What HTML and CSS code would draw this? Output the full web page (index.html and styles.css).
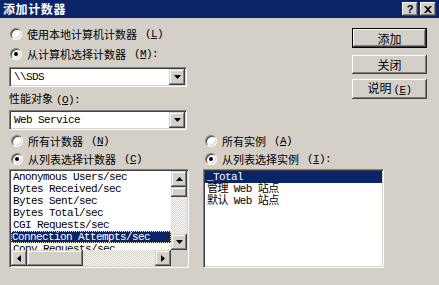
FILE: index.html
```html
<!DOCTYPE html>
<html lang="zh-CN">
<head>
    <meta charset="UTF-8">
    <title>添加计数器</title>
    <link rel="stylesheet" href="styles.css">
</head>
<body>

    <div class="window">
        <div class="titlebar">
            <span class="title">添加计数器</span>
            <div class="caption-buttons">
                <span class="cap-btn">?</span>
                <span class="cap-btn">
                    <svg width="8" height="7" viewBox="0 0 8 7"><path d="M0 0h2l2 2 2-2h2L5 3.5 8 7H6L4 5 2 7H0l3-3.5z" fill="#000"/></svg>
                </span>
            </div>
        </div>

        <div class="client">
            <div class="top">
                <div class="source">
                    <div class="radio-row"><span class="radio"></span>使用本地计算机计数器<span class="key">(<u>L</u>)</span></div>
                    <div class="radio-row"><span class="radio checked"></span>从计算机选择计数器<span class="key">(<u>M</u>):</span></div>
                    <div class="combo">
                        <span class="combo-text">\\SDS</span>
                        <span class="btn3d arrow-btn"><svg width="7" height="4" viewBox="0 0 7 4"><path d="M0 0h7L3.5 4z" fill="#000"/></svg></span>
                    </div>
                    <div class="field-label">性能对象<span class="key">(<u>O</u>):</span></div>
                    <div class="combo">
                        <span class="combo-text">Web Service</span>
                        <span class="btn3d arrow-btn"><svg width="7" height="4" viewBox="0 0 7 4"><path d="M0 0h7L3.5 4z" fill="#000"/></svg></span>
                    </div>
                </div>

                <div class="buttons">
                    <button class="push default">添加</button>
                    <button class="push close-btn">关闭</button>
                    <button class="push help-btn">说明<span class="key">(<u>E</u>)</span></button>
                </div>
            </div>

            <div class="bottom">
                <div class="panel counters">
                    <div class="radio-row short"><span class="radio"></span>所有计数器<span class="key">(<u>N</u>)</span></div>
                    <div class="radio-row short"><span class="radio checked"></span>从列表选择计数器<span class="key">(<u>C</u>)</span></div>
                    <div class="listbox with-scroll">
                        <ul class="items">
                            <li>Anonymous Users/sec</li>
                            <li>Bytes Received/sec</li>
                            <li>Bytes Sent/sec</li>
                            <li>Bytes Total/sec</li>
                            <li>CGI Requests/sec</li>
                            <li class="selected focused">Connection Attempts/sec</li>
                            <li>Copy Requests/sec</li>
                        </ul>
                        <div class="vscroll">
                            <span class="btn3d sb-btn"><svg width="7" height="4" viewBox="0 0 7 4"><path d="M0 4h7L3.5 0z" fill="#000"/></svg></span>
                            <span class="btn3d vthumb"></span>
                            <span class="track"></span>
                            <span class="btn3d sb-btn"><svg width="7" height="4" viewBox="0 0 7 4"><path d="M0 0h7L3.5 4z" fill="#000"/></svg></span>
                        </div>
                        <div class="hscroll">
                            <span class="btn3d sb-btn"><svg width="4" height="7" viewBox="0 0 4 7"><path d="M4 0v7L0 3.5z" fill="#000"/></svg></span>
                            <span class="btn3d hthumb"></span>
                            <span class="track"></span>
                            <span class="btn3d sb-btn"><svg width="4" height="7" viewBox="0 0 4 7"><path d="M0 0v7L4 3.5z" fill="#000"/></svg></span>
                        </div>
                        <div class="corner"></div>
                    </div>
                </div>

                <div class="panel instances">
                    <div class="radio-row short"><span class="radio"></span>所有实例<span class="key">(<u>A</u>)</span></div>
                    <div class="radio-row short"><span class="radio checked"></span>从列表选择实例<span class="key">(<u>I</u>):</span></div>
                    <div class="listbox">
                        <ul class="items">
                            <li class="selected">_Total</li>
                            <li>管理 Web 站点</li>
                            <li>默认 Web 站点</li>
                        </ul>
                    </div>
                </div>
            </div>
        </div>
    </div>

</body>
</html>
```

FILE: styles.css
```css
* {
    margin: 0;
    padding: 0;
    box-sizing: border-box;
}

body {
    background: #d4d0c8;
    font-family: "Noto Sans CJK SC", sans-serif;
    font-size: 11px;
    color: #000;
    overflow: hidden;
}

.window {
    width: 439px;
    height: 285px;
}

/* title bar */
.titlebar {
    height: 18px;
    background: #0a246a;
    display: flex;
    align-items: center;
    padding: 0 3px 0 3px;
}

.title {
    color: #fff;
    font-weight: bold;
    font-size: 12px;
    letter-spacing: 0.6px;
    line-height: 18px;
}

.caption-buttons {
    margin-left: auto;
    display: flex;
    gap: 2px;
}

.cap-btn {
    width: 16px;
    height: 14px;
    background: #d4d0c8;
    display: flex;
    align-items: center;
    justify-content: center;
    font-family: "Liberation Sans", sans-serif;
    font-weight: bold;
    font-size: 11px;
    line-height: 14px;
    box-shadow: inset -1px -1px #404040, inset 1px 1px #fff, inset -2px -2px #808080;
}

/* 3d helpers */
.btn3d {
    background: #d4d0c8;
    display: flex;
    align-items: center;
    justify-content: center;
    box-shadow: inset -1px -1px #404040, inset 1px 1px #d4d0c8, inset -2px -2px #808080, inset 2px 2px #fff;
}

.key {
    margin-left: 3px;
    font-family: "Liberation Mono", monospace;
    font-size: 11px;
    letter-spacing: -0.6px;
}

.client {
    padding: 6px 0 0 9px;
}

.top {
    display: flex;
}

.source {
    width: 178px;
}

/* radios */
.radio-row {
    height: 20px;
    display: flex;
    align-items: center;
    gap: 5px;
    padding-left: 1px;
    white-space: nowrap;
}

.radio-row.short {
    height: 18px;
}

.radio {
    position: relative;
    width: 12px;
    height: 12px;
    flex: none;
    border-radius: 50%;
    background: #fff;
    border: 1px solid;
    border-color: #808080 #fff #fff #808080;
    box-shadow: inset 1px 1px #404040, inset -1px -1px #d4d0c8;
}

.radio.checked::after {
    content: "";
    position: absolute;
    left: 3px;
    top: 3px;
    width: 4px;
    height: 4px;
    border-radius: 50%;
    background: #000;
}

/* combo boxes */
.combo {
    margin-top: 3px;
    height: 20px;
    background: #fff;
    display: flex;
    align-items: center;
    padding: 2px;
    border: 1px solid;
    border-color: #808080 #fff #fff #808080;
    box-shadow: inset 1px 1px #404040, inset -1px -1px #d4d0c8;
}

.combo-text {
    flex: 1;
    padding-left: 2px;
    font-family: "Liberation Mono", monospace;
    font-size: 11px;
    letter-spacing: -0.6px;
    line-height: 16px;
}

.arrow-btn {
    width: 16px;
    height: 16px;
    margin-right: -1px;
}

.field-label {
    height: 23px;
    line-height: 23px;
    white-space: nowrap;
}

.field-label + .combo {
    margin-top: 0;
}

/* push buttons */
.buttons {
    margin-left: auto;
    margin-right: 12px;
    width: 75px;
    padding-top: 4px;
    display: flex;
    flex-direction: column;
}

.push {
    font-family: "Noto Sans CJK SC", sans-serif;
    font-size: 12px;
    background: #d4d0c8;
    border: none;
    height: 19px;
    line-height: 17px;
    box-shadow: inset -1px -1px #404040, inset 1px 1px #fff, inset -2px -2px #808080;
}

.push.default {
    height: 20px;
    border: 1px solid #000;
}

.close-btn {
    margin-top: 7px;
}

.help-btn {
    margin-top: 5px;
    height: 20px;
}

.help-btn .key {
    margin-left: 2px;
}

/* bottom lists */
.bottom {
    display: flex;
    margin-top: 2px;
}

.panel.counters {
    width: 180px;
}

.panel.instances {
    width: 181px;
    margin-left: 14px;
}

.panel .radio-row {
    padding-left: 2px;
}

.listbox {
    margin-top: 1px;
    height: 99px;
    background: #fff;
    border: 1px solid;
    border-color: #808080 #fff #fff #808080;
    box-shadow: inset 1px 1px #404040, inset -1px -1px #d4d0c8;
    padding: 1px;
    overflow: hidden;
}

.listbox.with-scroll {
    display: grid;
    grid-template-columns: 1fr 16px;
    grid-template-rows: 1fr 16px;
}

.items {
    list-style: none;
    overflow: hidden;
    font-family: "Liberation Mono", "Noto Sans CJK SC", monospace;
    font-size: 11px;
    letter-spacing: -0.6px;
}

.items li {
    height: 12px;
    line-height: 12px;
    padding-left: 2px;
    white-space: nowrap;
}

.items li.selected {
    background: #0a246a;
    color: #fff;
}

.items li.focused {
    outline: 1px dotted #e8e4b0;
    outline-offset: -1px;
    padding-left: 1px;
}

/* scroll bars */
.vscroll {
    display: flex;
    flex-direction: column;
}

.hscroll {
    display: flex;
}

.sb-btn {
    width: 16px;
    height: 16px;
    flex: none;
}

.track {
    flex: 1;
    background: repeating-conic-gradient(#d4d0c8 0 25%, #fff 0 50%) 0 0 / 2px 2px;
}

.vthumb {
    height: 10px;
    flex: none;
}

.hthumb {
    width: 56px;
    flex: none;
}

.corner {
    background: #d4d0c8;
}
```
